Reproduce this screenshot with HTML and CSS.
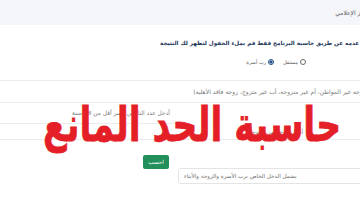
FILE: index.html
```html
<!DOCTYPE html>
<html lang="ar">
<head>
<meta charset="utf-8">
<link rel="stylesheet" href="styles.css">
</head>
<body>
<div class="page">
  <header class="topbar"><span class="crumb">المركز الإعلامي</span></header>
  <p class="lead">عدمه عن طريق حاسبة البرنامج فقط قم بملء الحقول لتظهر لك النتيجة</p>
  <div class="radios">
    <label class="opt"><span class="radio"></span>مستقل</label>
    <label class="opt"><span class="radio checked"></span>رب أسرة</label>
  </div>
  <div class="row row-status"><span class="ph">(أرملة، مطلقة، زوجة غير المواطن، أم غير متزوجة، أب غير متزوج، زوجة فاقد الأهلية)</span></div>
  <div class="row row-split">
    <div class="cell cell-right"></div>
    <div class="cell cell-left"><span class="ph">أدخل عدد التابعين لأسر أقل من 18 سنة</span></div>
  </div>
  <div class="row row-income"><span class="ph">أدخل الدخل من الزوجة</span></div>
  <div class="actions">
    <div class="income-input"><span class="ph">يشمل الدخل الخاص برب الأسرة والزوجة والأبناء</span></div>
    <button class="btn">احسب</button>
  </div>
  <h1 class="title">حاسبة الحد المانع</h1>
</div>
</body>
</html>
```
FILE: styles.css
```css
html, body {
  margin: 0;
  padding: 0;
  background: #ffffff;
}
body {
  width: 360px;
  height: 200px;
  overflow: hidden;
  position: relative;
  font-family: "DejaVu Sans", sans-serif;
}
.page {
  direction: rtl;
  width: 360px;
}
.topbar {
  height: 25px;
  background: #f5f6f9;
  display: flex;
  align-items: center;
  margin-right: -40px;
  padding-right: 26px;
  font-size: 6px;
  color: #555a62;
  white-space: nowrap;
}
.lead {
  margin: 0;
  padding: 13px 1px 0 0;
  height: 10px;
  line-height: 10px;
  font-size: 5.65px;
  font-weight: bold;
  color: #1b3658;
  white-space: nowrap;
}
.radios {
  display: flex;
  gap: 9px;
  padding-right: 54px;
  margin-top: 9px;
  height: 10px;
  align-items: center;
}
.opt {
  display: flex;
  align-items: center;
  gap: 2px;
  font-size: 5px;
  color: #555;
}
.radio {
  width: 4px;
  height: 4px;
  border: 1px solid #6b6b6b;
  border-radius: 50%;
  box-sizing: content-box;
}
.radio.checked {
  border-color: #1d4c86;
  background: radial-gradient(circle, #1d4c86 0 50%, #ffffff 60%);
}
.row {
  margin-right: -60px;
  white-space: nowrap;
  display: flex;
  align-items: center;
  color: #7a7a7a;
  font-size: 5.6px;
}
.row-status {
  margin-top: 13px;
  height: 21px;
  border-top: 1px solid #ebebeb;
  border-bottom: 1px solid #ebebeb;
  padding-right: 15px;
  font-size: 6px;
}
.row-split {
  height: 21px;
  padding: 0;
  align-items: stretch;
}
.cell-right {
  width: 245px;
}
.cell-left {
  flex: 1;
  border-bottom: 1px solid #ebebeb;
  display: flex;
  align-items: center;
  padding-right: 5px;
  font-size: 5.9px;
}
.row-income {
  height: 15px;
  border-bottom: 1px solid #ebebeb;
  padding-right: 117px;
}
.actions {
  display: flex;
  align-items: flex-start;
  gap: 9px;
}
.income-input {
  margin-right: -40px;
  margin-top: 28px;
  width: 222px;
  height: 16px;
  border: 1px solid #e4e4e4;
  border-radius: 3px;
  display: flex;
  align-items: center;
  direction: ltr;
  padding-left: 5px;
  box-sizing: border-box;
  font-size: 5.6px;
  color: #6f6f6f;
  white-space: nowrap;
}
.income-input .ph {
  direction: rtl;
}
.btn {
  margin-top: 15px;
  width: 26px;
  height: 14px;
  padding: 0;
  border: none;
  border-radius: 2px;
  background: #23905c;
  color: #ffffff;
  font-family: "DejaVu Sans", sans-serif;
  font-size: 5.6px;
}
.title {
  position: absolute;
  left: 43px;
  top: 100px;
  margin: 0;
  font-size: 48px;
  line-height: 48px;
  font-weight: bold;
  color: #e41f28;
  -webkit-text-stroke: 0.8px #e41f28;
  white-space: nowrap;
  direction: rtl;
  transform: scaleX(0.72);
  transform-origin: left center;
}
```
